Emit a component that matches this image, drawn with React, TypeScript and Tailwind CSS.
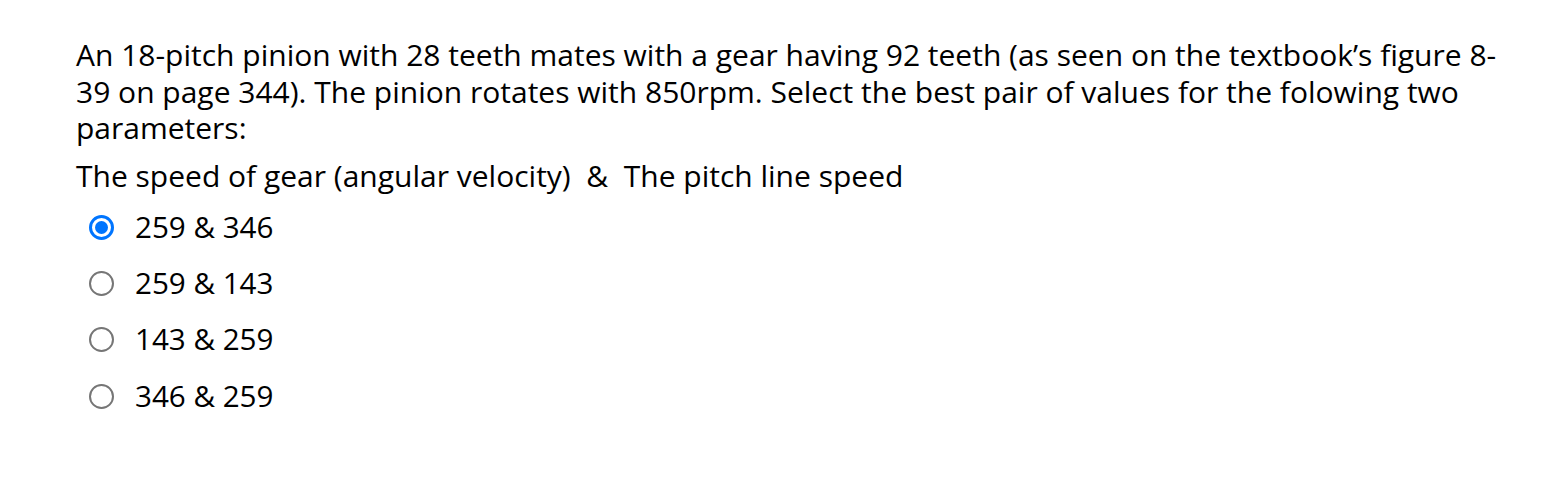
import React from 'react';

const options = ['259 & 346', '259 & 143', '143 & 259', '346 & 259'];

const Radio = ({ checked }: { checked: boolean }) =>
  checked ? (
    <span className="flex h-[25px] w-[25px] items-center justify-center rounded-full border-[3px] border-[#0075ff] bg-white">
      <span className="h-[13px] w-[13px] rounded-full bg-[#0075ff]" />
    </span>
  ) : (
    <span className="h-[25px] w-[25px] rounded-full border-[2.5px] border-[#767676] bg-white" />
  );

const App = () => {
  const selected = 0;

  return (
    <div className="min-h-[504px] bg-white font-['Open_Sans',sans-serif] text-black">
      <div className="w-[1516px] pl-[76px] pt-[37px] text-[30px] leading-[36.5px]">
        <p>
          An 18-pitch pinion with 28 teeth mates with a gear having 92 teeth (as seen on the textbook’s figure 8-<wbr />39
          on page 344). The pinion rotates with 850rpm. Select the best pair of values for the folowing two parameters:
        </p>
        <p className="mt-[11px]">
          The speed of gear (angular velocity)&nbsp; &amp;&nbsp; The pitch line speed
        </p>
        <div className="mt-[5px] flex flex-col">
          {options.map((opt, i) => (
            <label key={opt} className="flex h-[56.3px] items-center gap-[21px] pl-[13px]">
              <Radio checked={i === selected} />
              <span className="text-[29.6px]">{opt}</span>
            </label>
          ))}
        </div>
      </div>
    </div>
  );
};

export default App;
